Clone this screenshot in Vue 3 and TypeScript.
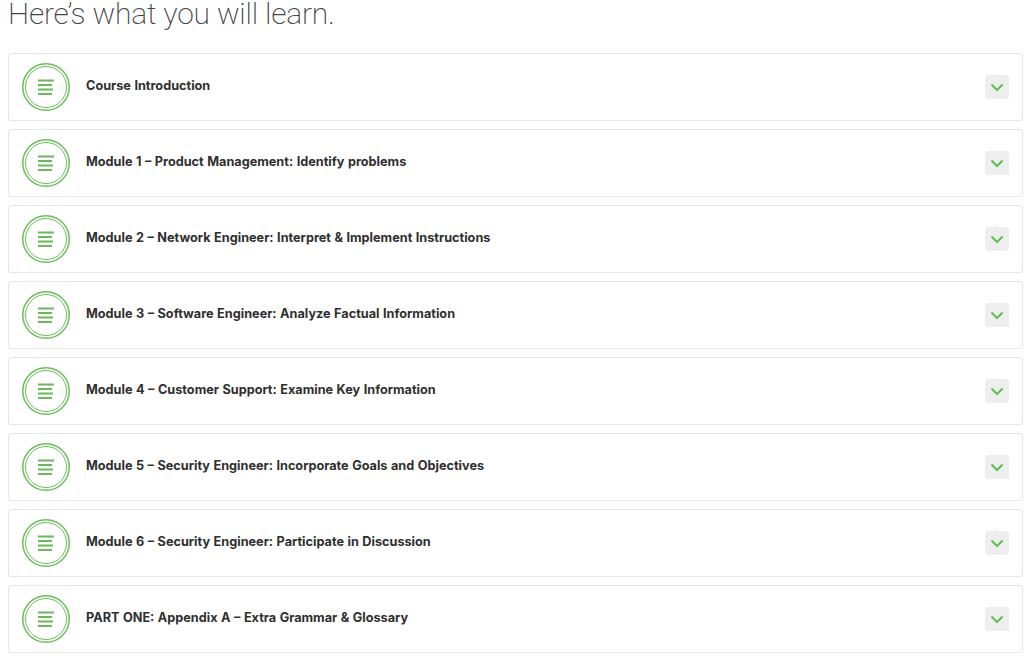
<script setup lang="ts">
const modules: string[] = [
  "Course Introduction",
  "Module 1 – Product Management: Identify problems",
  "Module 2 – Network Engineer: Interpret & Implement Instructions",
  "Module 3 – Software Engineer: Analyze Factual Information",
  "Module 4 – Customer Support: Examine Key Information",
  "Module 5 – Security Engineer: Incorporate Goals and Objectives",
  "Module 6 – Security Engineer: Participate in Discussion",
  "PART ONE: Appendix A – Extra Grammar & Glossary",
];
</script>

<template>
  <div class="page">
    <h1 class="title">Here’s what you will learn.</h1>
    <div class="list">
      <div v-for="m in modules" :key="m" class="row">
        <svg class="badge" width="48" height="48" viewBox="0 0 48 48" fill="none">
          <circle cx="24" cy="24" r="23.25" stroke="#6cbf5c" stroke-width="1.5" />
          <circle cx="24" cy="24" r="20.5" stroke="#6cbf5c" stroke-width="1" />
          <path d="M16 17.5h16M16 22h14M16 26.5h15M16 31h14" stroke="#6cb85c" stroke-width="2" />
        </svg>
        <span class="name">{{ m }}</span>
        <span class="toggle">
          <svg width="14" height="9" viewBox="0 0 14 9" fill="none">
            <path d="M1.5 1.5L7 7l5.5-5.5" stroke="#62bf52" stroke-width="2" />
          </svg>
        </span>
      </div>
    </div>
  </div>
</template>

<style>
html,
body {
  background: #fff;
  overflow: hidden;
}
</style>

<style scoped>
.page {
  padding: 0 10px 0 8px;
  height: 658px;
  overflow: hidden;
  font-family: Inter, "Liberation Sans", sans-serif;
}
.title {
  margin: 0;
  height: 53px;
  line-height: 27px;
  font-family: Roboto, Inter, sans-serif;
  font-size: 30px;
  font-weight: 200;
  letter-spacing: -0.2px;
  color: #444444;
}
.list {
  display: flex;
  flex-direction: column;
  gap: 8px;
}
.row {
  display: flex;
  align-items: center;
  height: 68px;
  box-sizing: border-box;
  padding: 0 13px;
  border: 1px solid #e6e6e6;
  border-radius: 3px;
}
.badge {
  flex: none;
}
.name {
  flex: 1;
  margin-left: 16px;
  margin-top: -3px;
  font-size: 12.7px;
  font-weight: 700;
  word-spacing: 0.5px;
  color: #2f2f2f;
}
.toggle {
  display: flex;
  align-items: center;
  justify-content: center;
  width: 24px;
  height: 24px;
  border-radius: 3px;
  background: #eeeeee;
}
</style>
